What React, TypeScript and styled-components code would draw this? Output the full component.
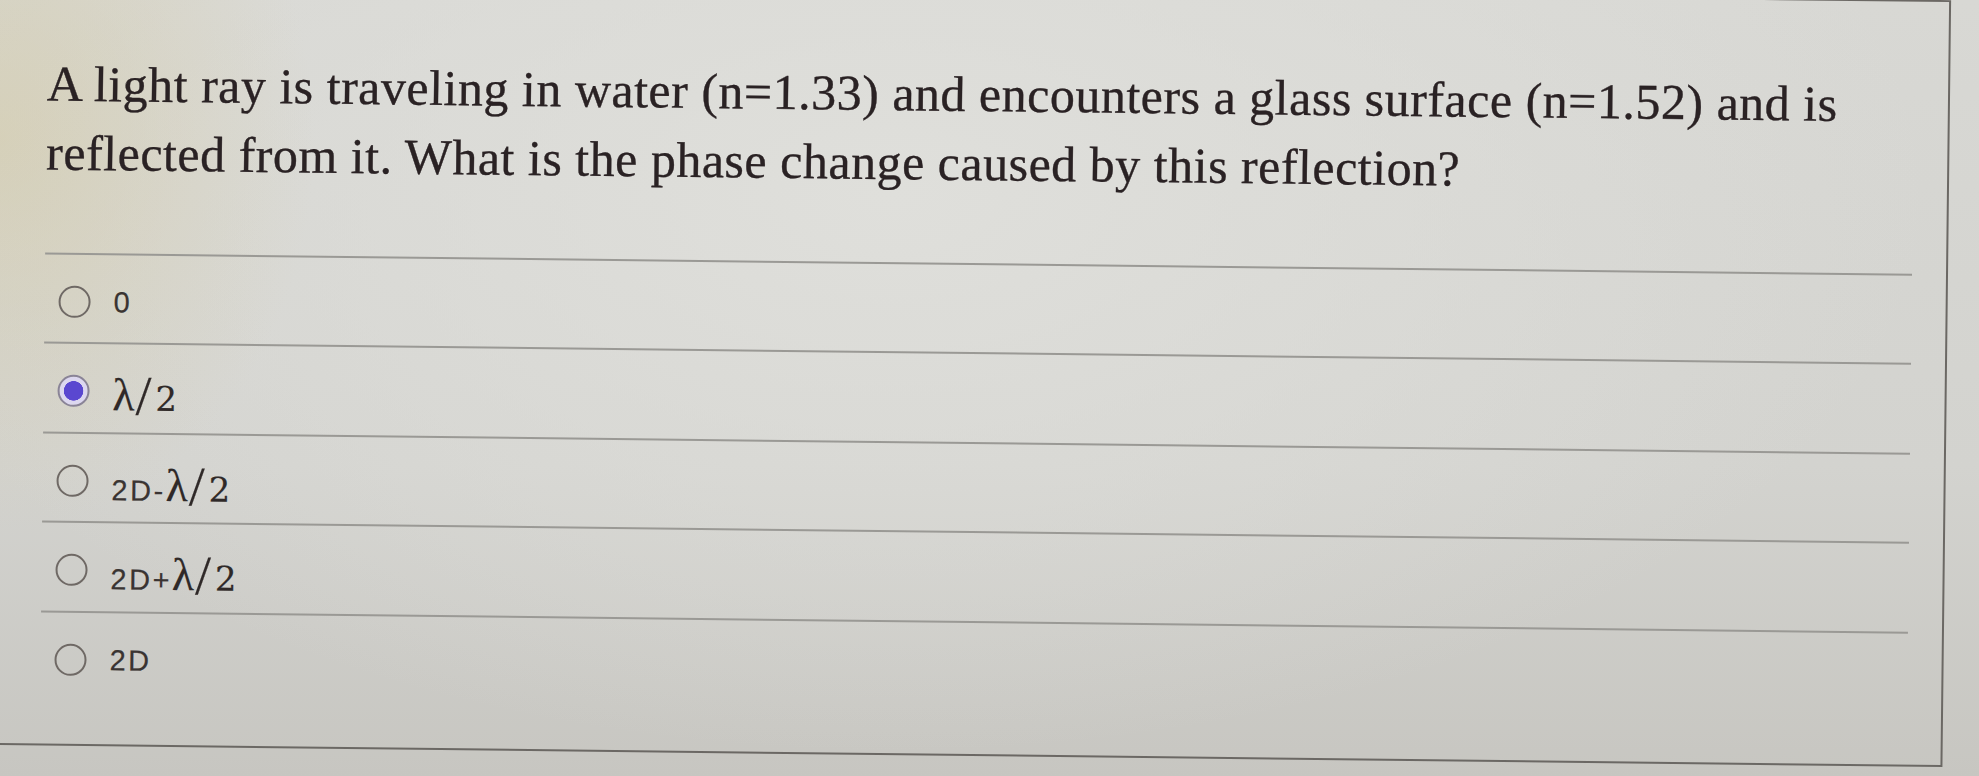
import React from 'react'
import styled, { createGlobalStyle } from 'styled-components'

type TOption = {
  text?: string
  math?: boolean
  checked?: boolean
}

const options: TOption[] = [
  { text: '0' },
  { math: true, checked: true },
  { text: '2D-', math: true },
  { text: '2D+', math: true },
  { text: '2D' },
]

const GlobalStyle = createGlobalStyle`
  html, body {
    margin: 0;
    padding: 0;
    overflow: hidden;
    background: #cbcac5;
  }
`

// the photo of the screen: warm light at the left edge, darker towards the bottom
const Stage = styled.div`
  width: 1979px;
  height: 776px;
  overflow: hidden;
  background:
    radial-gradient(ellipse 420px 520px at 0% 18%, rgba(212, 203, 168, 0.6), rgba(212, 203, 168, 0) 75%),
    radial-gradient(ellipse 1300px 700px at 45% 25%, #dfdfdb, rgba(223, 223, 219, 0) 80%),
    linear-gradient(180deg, #d8d8d4 0%, #d3d3cf 60%, #c7c6c1 100%);
`

const Card = styled.div`
  width: 1971px;
  margin: -22px 0 0 -20px;
  box-sizing: border-box;
  border: 2px solid #6b6864;
  padding: 69px 34px 44px 66px;
  transform: rotate(0.65deg);
  transform-origin: 20px 22px;
`

const Question = styled.p`
  margin: 0;
  font-family: 'Liberation Serif', 'DejaVu Serif', serif;
  font-size: 50px;
  line-height: 69px;
  letter-spacing: 0.5px;
  color: #2a2224;
  -webkit-text-stroke: 0.35px #2a2224;
`

const OptionList = styled.div`
  margin-top: 64.5px;
  display: flex;
  flex-direction: column;
`

const OptionRow = styled.label`
  display: flex;
  align-items: center;
  gap: 23px;
  height: 89.5px;
  box-sizing: border-box;
  border-top: 2px solid #9a9995;
  padding: 29px 0 22.5px 14px;
  cursor: pointer;
`

const Radio = styled.span<{ $checked?: boolean }>`
  width: 32px;
  height: 32px;
  flex-shrink: 0;
  box-sizing: border-box;
  border-radius: 50%;
  border: 2px solid ${(p) => (p.$checked ? '#8a8497' : '#6f6965')};
  background: ${(p) =>
    p.$checked
      ? 'radial-gradient(circle, #5a47d0 0 9.5px, #dcd7ef 10px)'
      : 'transparent'};
`

const Label = styled.span`
  display: flex;
  align-items: baseline;
  height: 36px;
  line-height: 36px;
  font-family: 'Liberation Sans', Arial, sans-serif;
  font-size: 29px;
  letter-spacing: 2.5px;
  color: #3a3432;
  -webkit-text-stroke: 0.2px #3a3432;
`

const MathGlyph = styled.span<{ $size: number; $serif?: boolean; $gap?: number; $drop?: number }>`
  font-family: ${(p) => (p.$serif ? "'DejaVu Serif', serif" : "'Liberation Serif', serif")};
  font-size: ${(p) => p.$size}px;
  letter-spacing: 0;
  margin-right: ${(p) => p.$gap ?? 0}px;
  position: relative;
  top: ${(p) => p.$drop ?? 0}px;
  color: #2f2928;
`

const HalfLambda = () => (
  <>
    <MathGlyph $size={46} $gap={1}>λ</MathGlyph>
    <MathGlyph $size={56} $gap={4} $drop={4}>/</MathGlyph>
    <MathGlyph $size={34} $serif>2</MathGlyph>
  </>
)

export default function App() {
  return (
    <>
      <GlobalStyle />
      <Stage>
        <Card>
          <Question>
            A light ray is traveling in water (n=1.33) and encounters a glass surface (n=1.52) and is
            <br />
            reflected from it. What is the phase change caused by this reflection?
          </Question>
          <OptionList>
            {options.map((o, i) => (
              <OptionRow key={i}>
                <Radio $checked={o.checked} />
                <Label>
                  {o.text}
                  {o.math && <HalfLambda />}
                </Label>
              </OptionRow>
            ))}
          </OptionList>
        </Card>
      </Stage>
    </>
  )
}
